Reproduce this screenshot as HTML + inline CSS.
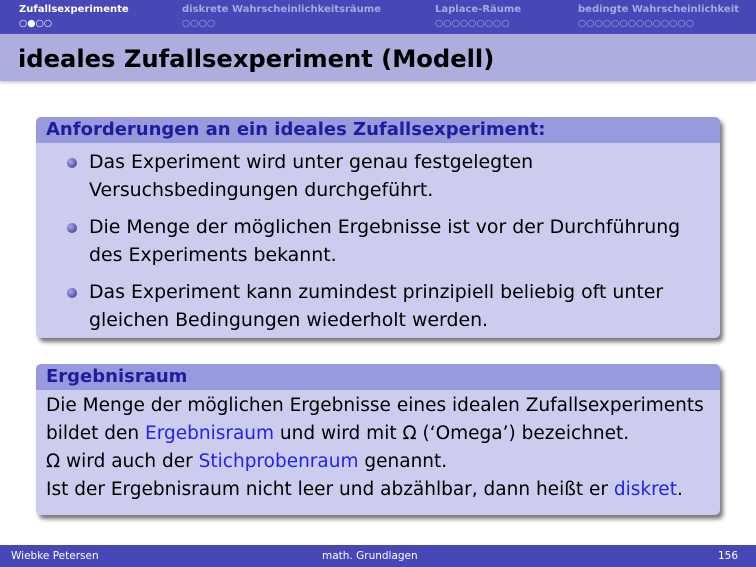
<!DOCTYPE html>
<html><head><meta charset="utf-8"><style>
body{margin:0;width:756px;height:567px;position:relative;background:#fff;font-family:"DejaVu Sans","Liberation Sans",sans-serif;overflow:hidden}
.hdr{position:absolute;left:0;top:0;width:756px;height:34px;background:#4747b8}
.sec{position:absolute;top:4px;font-size:10px;font-weight:bold;color:#a8a8e0}
.sec.on{color:#fff}
.dots{position:absolute;top:18px;font-size:9.5px;color:#a8a8e0}
.tband{position:absolute;left:0;top:34px;width:756px;height:47px;background:#adadde;box-shadow:0 2px 3px #ccc}
.title{position:absolute;left:18px;top:45px;font-size:24.2px;font-weight:bold;color:#000}
.blk{position:absolute;left:36px;width:684px;border-radius:5px;box-shadow:3px 4px 4px #777;background:#ccccee;overflow:hidden}
.bt{background:#9999dd;color:#1e1e9c;font-weight:bold;font-size:18px;padding:2px 10px;height:22px;line-height:22px}
.bb{font-size:18.9px;color:#000;line-height:28px;white-space:nowrap}
ul{margin:0;padding:5px 0 4px 53px;list-style:none}
li{position:relative;margin-bottom:9px}
li:before{content:"";position:absolute;left:-22px;top:10px;width:10px;height:10px;border-radius:50%;background:radial-gradient(circle at 35% 35%,#aaaaee,#2a2a80)}
.ftr{position:absolute;left:0;top:545px;width:756px;height:22px;background:#4747b8;color:#fff;font-size:10.5px;line-height:22px}
a{color:#2222ee;text-decoration:none}
</style></head><body>
<div class="hdr">
<div class="sec on" style="left:19px">Zufallsexperimente</div>
<div class="dots" style="left:19px;color:#fff">○●○○</div>
<div class="sec" style="left:182px">diskrete Wahrscheinlichkeitsräume</div>
<div class="dots" style="left:182px">○○○○</div>
<div class="sec" style="left:435px">Laplace-Räume</div>
<div class="dots" style="left:435px">○○○○○○○○○</div>
<div class="sec" style="left:578px">bedingte Wahrscheinlichkeit</div>
<div class="dots" style="left:578px">○○○○○○○○○○○○○○</div>
</div>
<div class="tband"></div>
<div class="title">ideales Zufallsexperiment (Modell)</div>
<div class="blk" style="top:117px;height:221px">
<div class="bt">Anforderungen an ein ideales Zufallsexperiment:</div>
<div class="bb"><ul>
<li>Das Experiment wird unter genau festgelegten<br>Versuchsbedingungen durchgeführt.</li>
<li>Die Menge der möglichen Ergebnisse ist vor der Durchführung<br>des Experiments bekannt.</li>
<li>Das Experiment kann zumindest prinzipiell beliebig oft unter<br>gleichen Bedingungen wiederholt werden.</li>
</ul></div></div>
<div class="blk" style="top:364px;height:151px">
<div class="bt">Ergebnisraum</div>
<div class="bb" style="padding:2px 10px;font-size:18.5px">Die Menge der möglichen Ergebnisse eines idealen Zufallsexperiments<br>bildet den <a>Ergebnisraum</a> und wird mit Ω (‘Omega’) bezeichnet.<br>Ω wird auch der <a>Stichprobenraum</a> genannt.<br>Ist der Ergebnisraum nicht leer und abzählbar, dann heißt er <a>diskret</a>.</div>
</div>
<div class="ftr"><span style="position:absolute;left:11px">Wiebke Petersen</span><span style="position:absolute;left:322px">math. Grundlagen</span><span style="position:absolute;right:18px">156</span></div>
</body></html>
